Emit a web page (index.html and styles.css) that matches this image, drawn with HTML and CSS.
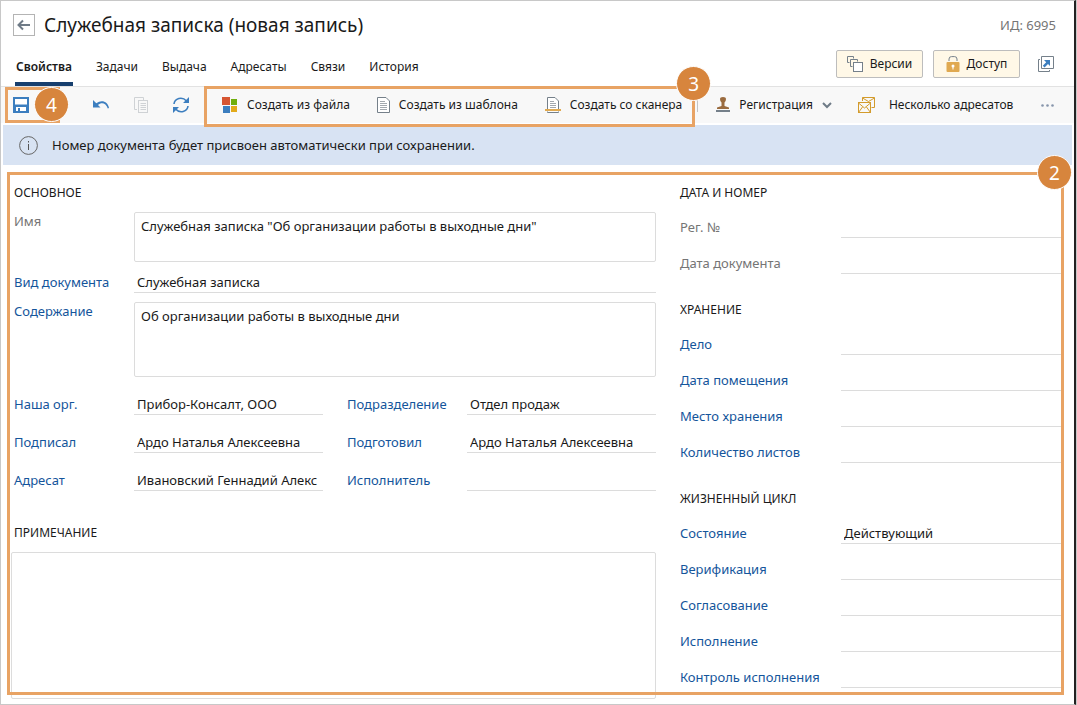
FILE: index.html
```html
<!DOCTYPE html>
<html lang="ru">
<head>
<meta charset="utf-8">
<title>Служебная записка (новая запись)</title>
<link rel="stylesheet" href="styles.css">
</head>
<body>
<div class="window">
  <header class="header">
    <div class="header-main">
      <div class="title-row">
        <button class="back" type="button" aria-label="Назад">
          <svg width="14" height="12" viewBox="0 0 14 12" fill="none" stroke="#6f7b87" stroke-width="2"><path d="M1.500 6H13M6 1.500L1.500 6L6 10.500"/></svg>
        </button>
        <h1 class="title">Служебная записка (новая запись)</h1>
      </div>
      <nav class="tabs">
        <a class="tab tab-active" href="#props">Свойства</a>
        <a class="tab" href="#tasks">Задачи</a>
        <a class="tab" href="#issue">Выдача</a>
        <a class="tab" href="#addressees">Адресаты</a>
        <a class="tab" href="#links">Связи</a>
        <a class="tab" href="#history">История</a>
      </nav>
    </div>
    <div class="header-side">
      <div class="record-id">ИД: 6995</div>
      <div class="header-actions">
        <button class="card-button" type="button">
          <svg width="16" height="16" viewBox="0 0 16 16" fill="#fff8e7" stroke="#75808a"><path d="M2.500 6.500H.5V.5H6.500V2.500" fill="none"/><path d="M5.500 10.500H3.500V3.500H10.500V5.500" fill="none"/><rect x="6.500" y="6.500" width="9" height="9" fill="#fff"/></svg>
          Версии
        </button>
        <button class="card-button" type="button">
          <svg width="14" height="16" viewBox="0 0 14 16"><path d="M3 5V3Q3 .6 5.500 .6H8.500Q11 .6 11 3V5" fill="none" stroke="#75808a"/><rect x=".5" y="6" width="13" height="10" rx="1" fill="#e0a950"/><circle cx="7" cy="10" r="1.500" fill="#fff"/><path d="M6.500 10h1v3.500h-1z" fill="#fff"/></svg>
          Доступ
        </button>
        <button class="icon-button" type="button" aria-label="Открыть в новом окне">
          <svg width="16" height="16" viewBox="0 0 16 16" fill="none"><path d="M3.500 .5H15.500V12.500H3.500Z" stroke="#75808a"/><path d="M2 3.500H.5V15.500H11.500V14" stroke="#75808a"/><path d="M6 4H12V10L10 8L6.500 11.500L4.800 9.800L8.200 6.200Z" fill="#3c7ebf"/></svg>
        </button>
      </div>
    </div>
  </header>

  <div class="toolbar" role="toolbar">
    <div class="save-group">
      <button class="icon-button" type="button" aria-label="Сохранить">
        <svg width="16" height="16" viewBox="0 0 16 16"><path d="M0 0H16V16H0Z" fill="#3c7ebf"/><path d="M2 2H14V7.500H2ZM3 10H13V14H3Z" fill="#fff"/><path d="M5 11H7V14H5Z" fill="#3c7ebf"/></svg>
      </button>
      <span class="frame frame-save"></span>
      <span class="badge badge-save">4</span>
    </div>
    <div class="edit-group">
      <button class="icon-button" type="button" aria-label="Отменить">
        <svg width="17" height="12" viewBox="0 0 17 12"><path d="M0 1L0 8.500L7.500 8.500L5 6C8.500 3 13 4 14.800 9.500L16 9C15 2.500 8.500 0 3.300 4.300Z" fill="#3c7ebf"/></svg>
      </button>
      <button class="icon-button" type="button" aria-label="Копировать" disabled>
        <svg width="15" height="16" viewBox="0 0 15 16" fill="none" stroke="#cfd2d5"><path d="M3 12.500H.5V.5H9.500V3"/><rect x="4.500" y="3.500" width="9" height="12"/><path d="M6.500 6.500H12M6.500 8.500H12M6.500 10.500H12M6.500 12.500H12"/></svg>
      </button>
      <button class="icon-button" type="button" aria-label="Обновить">
        <svg width="16" height="16" viewBox="0 0 16 16" fill="none"><path d="M1 7C1.600 1.500 9-1 13.500 4M15 9C14.400 14.500 7 17 2.500 12" stroke="#3c7ebf" stroke-width="1.600"/><path d="M16 0V6H10ZM0 16V10H6Z" fill="#3c7ebf"/></svg>
      </button>
    </div>
    <div class="create-group">
      <button class="tool" type="button">
        <svg width="16" height="16" viewBox="0 0 16 16"><path d="M0 0H8V8H0Z" fill="#d65532"/><path d="M9 2H15V8H9Z" fill="#6fae0c"/><path d="M1 9H8V16H1Z" fill="#3c7ebf"/><path d="M9 9H15V15H9Z" fill="#e2aa1a"/></svg>
        Создать из файла
      </button>
      <button class="tool" type="button">
        <svg width="13" height="16" viewBox="0 0 13 16" fill="#fff" stroke="#75808a"><path d="M.5 .5H9L12.500 4V15.500H.5Z"/><path d="M3 4.500H8M3 6.500H10M3 8.500H10M3 10.500H10M3 12.500H10" stroke="#a2a8ae"/></svg>
        Создать из шаблона
      </button>
      <button class="tool" type="button">
        <svg width="16" height="16" viewBox="0 0 16 16" fill="#fff" stroke="#75808a"><path d="M2.500 12V.5H10L13.500 4V12M2.500 14.500V15.500H13.500V14.500"/><path d="M5 4.500H9M5 6.500H11M5 8.500H11M5 10.500H11" stroke="#a2a8ae"/><path d="M0 12H16V14H0Z" fill="#e0a950" stroke="none"/></svg>
        Создать со сканера
      </button>
      <span class="frame frame-create"></span>
      <span class="badge badge-create">3</span>
    </div>
    <span class="separator"></span>
    <div class="more-group">
      <button class="tool" type="button">
        <svg width="14" height="16" viewBox="0 0 14 16"><path d="M4 2Q4 0 7 0T10 2Q10 4 8.500 5.500V9L13 10.500V12H1V10.500L5.500 9V5.500Q4 4 4 2Z" fill="#9a6b3f"/><path d="M0 13H14V15H0Z" fill="#75808a"/></svg>
        Регистрация
        <svg class="chevron" width="10" height="8" viewBox="0 0 10 8" fill="none" stroke="#6f7b87" stroke-width="2"><path d="M1 2L5 6L9 2"/></svg>
      </button>
      <button class="tool tool-wide" type="button">
        <svg width="17" height="16" viewBox="0 0 17 16" fill="none" stroke="#d39b2c"><path d="M4.500 4V.5H16.500V10.500H13.500M4.500 1L10.500 4.500L16.500 1"/><rect x=".5" y="5.500" width="12" height="10"/><path d="M.5 6L6.500 11L12.500 6M.5 15.500L4.500 10M12.500 15.500L8.500 10"/></svg>
        Несколько адресатов
      </button>
      <button class="icon-button dots" type="button" aria-label="Ещё">
        <svg width="13" height="3" viewBox="0 0 13 3" fill="#8795ab"><circle cx="1.500" cy="1.500" r="1.300"/><circle cx="6.500" cy="1.500" r="1.300"/><circle cx="11.500" cy="1.500" r="1.300"/></svg>
      </button>
    </div>
  </div>

  <div class="notice" role="status">
    <svg width="19" height="19" viewBox="0 0 19 19"><circle cx="9.500" cy="9.500" r="8.900" fill="none" stroke="#666"/><path d="M9 8h1v6H9zM9 5h1v1.500H9z" fill="#555"/></svg>
    Номер документа будет присвоен автоматически при сохранении.
  </div>

  <main class="form">
    <span class="frame frame-form"></span>
    <span class="badge badge-form">2</span>

    <div class="column-left">
      <h2 class="heading">Основное</h2>
      <div class="wide-fields">
        <label class="label label-top label-muted" for="name">Имя</label>
        <textarea class="area area-name" id="name">Служебная записка "Об организации работы в выходные дни"</textarea>
        <label class="label" for="kind">Вид документа</label>
        <input class="line" id="kind" value="Служебная записка">
        <label class="label label-top" for="content">Содержание</label>
        <textarea class="area area-content" id="content">Об организации работы в выходные дни</textarea>
      </div>
      <div class="pair-fields">
        <label class="label" for="org">Наша орг.</label>
        <input class="line" id="org" value="Прибор-Консалт, ООО">
        <label class="label label-second" for="dept">Подразделение</label>
        <input class="line" id="dept" value="Отдел продаж">
        <label class="label" for="signed">Подписал</label>
        <input class="line" id="signed" value="Ардо Наталья Алексеевна">
        <label class="label label-second" for="prepared">Подготовил</label>
        <input class="line" id="prepared" value="Ардо Наталья Алексеевна">
        <label class="label" for="addressee">Адресат</label>
        <input class="line" id="addressee" value="Ивановский Геннадий Алекс">
        <label class="label label-second" for="executor">Исполнитель</label>
        <input class="line" id="executor">
      </div>
      <h2 class="heading heading-note"><label for="note">Примечание</label></h2>
      <textarea class="area area-note" id="note"></textarea>
    </div>

    <div class="column-right">
      <section class="section">
        <h2 class="heading">Дата и номер</h2>
        <div class="row"><label class="label label-muted" for="reg">Рег. №</label><input class="line" id="reg"></div>
        <div class="row"><label class="label label-muted" for="date">Дата документа</label><input class="line" id="date"></div>
      </section>
      <section class="section">
        <h2 class="heading">Хранение</h2>
        <div class="row"><label class="label" for="case">Дело</label><input class="line" id="case"></div>
        <div class="row"><label class="label" for="placed">Дата помещения</label><input class="line" id="placed"></div>
        <div class="row"><label class="label" for="place">Место хранения</label><input class="line" id="place"></div>
        <div class="row"><label class="label" for="sheets">Количество листов</label><input class="line" id="sheets"></div>
      </section>
      <section class="section">
        <h2 class="heading">Жизненный цикл</h2>
        <div class="row"><label class="label" for="state">Состояние</label><input class="line" id="state" value="Действующий"></div>
        <div class="row"><label class="label" for="verif">Верификация</label><input class="line" id="verif"></div>
        <div class="row"><label class="label" for="approve">Согласование</label><input class="line" id="approve"></div>
        <div class="row"><label class="label" for="exec">Исполнение</label><input class="line" id="exec"></div>
        <div class="row"><label class="label" for="control">Контроль исполнения</label><input class="line" id="control"></div>
      </section>
    </div>
  </main>
</div>
</body>
</html>
```
FILE: styles.css
```css
* {
  box-sizing: border-box;
}

body {
  margin: 0;
  background: #c8c8c8;
  color: #1a1a1a;
  font: 13px/18px "Noto Sans", "Open Sans", sans-serif;
}

button,
input,
textarea {
  margin: 0;
  padding: 0;
  border: 0;
  background: none;
  color: inherit;
  font: inherit;
}

svg {
  display: block;
  flex: none;
}

.window {
  display: flex;
  flex-direction: column;
  min-height: 100vh;
  margin-right: 1px;
  border: 1px solid #c8c8c8;
  border-right: 2px solid #222;
  background: #fff;
}

/* Header */
.header {
  display: flex;
  justify-content: space-between;
  height: 85px;
  padding: 0 18px 0 12px;
}

.header-main {
  display: flex;
  flex-direction: column;
  justify-content: space-between;
}

.title-row {
  display: flex;
  align-items: center;
  gap: 9px;
  padding-top: 12px;
}

.back {
  display: grid;
  place-items: center;
  width: 22px;
  height: 22px;
  border: 1px solid #b4b4b4;
}

.title {
  margin: 0;
  font-size: 19px;
  font-weight: 400;
  line-height: 24px;
}

.tabs {
  display: flex;
  gap: 22px;
  padding-left: 2px;
}

.tab {
  padding: 0 1px 6px;
  border-bottom: 4px solid transparent;
  color: inherit;
  font-size: 12px;
  text-decoration: none;
}

.tab-active {
  border-color: #173f6e;
  font-weight: 600;
}

.header-side {
  display: flex;
  flex-direction: column;
  justify-content: space-between;
  align-items: flex-end;
  padding: 15px 0 8px;
}

.record-id {
  color: #757575;
}

.header-actions {
  display: flex;
  align-items: center;
  gap: 10px;
  padding-right: 2px;
}

.card-button {
  display: flex;
  align-items: center;
  justify-content: center;
  gap: 7px;
  min-width: 87px;
  height: 28px;
  border: 1px solid #bdbdbd;
  border-radius: 2px;
  background: #fff8e7;
  font-size: 12px;
}

.card-button + .icon-button {
  margin-left: 8px;
}

/* Toolbar */
.toolbar {
  display: flex;
  align-items: center;
  height: 37px;
  margin-bottom: 2px;
  border-top: 1px solid #e2e2e2;
  background: #f8f8f8;
}

.save-group,
.create-group {
  position: relative;
  display: flex;
  align-items: center;
}

.save-group {
  width: 84px;
  padding-left: 12px;
}

.edit-group {
  display: flex;
  align-items: center;
  gap: 24px;
  padding: 0 33px 0 8px;
}

.create-group {
  gap: 27px;
  margin-right: 15px;
}

.tool {
  display: flex;
  align-items: center;
  gap: 9px;
  font-size: 12px;
  white-space: nowrap;
}

.tool-wide {
  gap: 14px;
}

.separator {
  width: 1px;
  height: 14px;
  margin-right: 18px;
  background: #c4c4c4;
}

.more-group {
  display: flex;
  flex: 1;
  align-items: center;
  gap: 26px;
  padding-right: 20px;
}

.dots {
  margin-left: auto;
}

/* Notice bar */
.notice {
  display: flex;
  align-items: center;
  gap: 14px;
  height: 40px;
  margin: 0 2px;
  padding: 0 16px;
  background: #d8e3f3;
}

/* Form */
.form {
  position: relative;
  display: grid;
  flex: 1;
  grid-template-columns: 645fr 381fr;
  gap: 24px;
  padding: 18px 13px 5px 10px;
}

.column-left {
  display: flex;
  flex-direction: column;
}

.heading {
  margin: 0 0 0 3px;
  font-size: 12px;
  font-weight: 400;
  line-height: 19px;
  text-transform: uppercase;
}

.column-right .heading {
  margin-left: 0;
}

.heading-note {
  margin-top: 32px;
}

.wide-fields,
.pair-fields {
  display: grid;
  padding-left: 3px;
}

.wide-fields {
  grid-template-columns: 120px 1fr;
  row-gap: 9px;
  padding-top: 10px;
}

.pair-fields {
  grid-template-columns: 120px 1fr 144px 1fr;
  row-gap: 16px;
  padding-top: 16px;
}

.label {
  color: #14559b;
  line-height: 22px;
}

.label-top {
  line-height: 18px;
}

.label-muted {
  color: #757575;
}

.label-second {
  padding-left: 24px;
}

.line {
  width: 100%;
  min-width: 0;
  height: 22px;
  padding-left: 3px;
  border-bottom: 1px solid #dcdcdc;
}

.area {
  display: block;
  width: 100%;
  padding: 4px 6px;
  border: 1px solid #dcdcdc;
  border-radius: 2px;
  resize: none;
}

.area-name {
  height: 50px;
}

.area-content {
  height: 75px;
}

.area-note {
  flex: 1;
  margin-top: 10px;
}

.section {
  padding-bottom: 26px;
}

.section:last-child {
  padding-bottom: 0;
}

.row {
  display: grid;
  grid-template-columns: 161px 1fr;
  align-items: end;
  height: 36px;
}

/* Callouts drawn over the page */
.frame {
  position: absolute;
  border: 3px solid #e8a364;
  pointer-events: none;
}

.frame-save {
  top: -10px;
  bottom: -10px;
  left: 4px;
  width: 55px;
  border-right: 0;
}

.frame-create {
  inset: -10px -13px -13px -18px;
}

.frame-form {
  inset: 7px 10px 9px 6px;
}

.badge {
  position: absolute;
  z-index: 1;
  display: grid;
  place-items: center;
  width: 35px;
  height: 35px;
  border: 1px solid #fff;
  border-radius: 50%;
  background: #d7853d;
  color: #fff;
  font-size: 19px;
}

.badge-save {
  top: -10px;
  left: 33px;
}

.badge-create {
  top: -30px;
  right: -29px;
}

.badge-form {
  top: -10px;
  right: 2px;
}
```
